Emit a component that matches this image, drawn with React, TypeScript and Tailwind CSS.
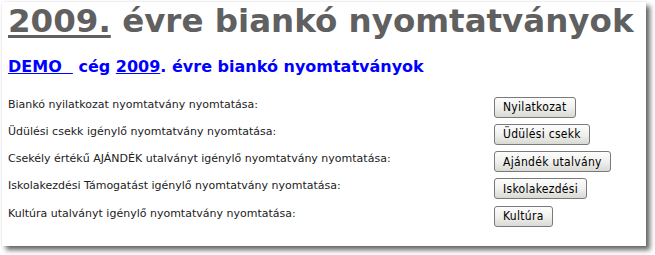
const rows = [
  { label: "Biankó nyilatkozat nyomtatvány nyomtatása:", button: "Nyilatkozat" },
  { label: "Üdülési csekk igénylő nyomtatvány nyomtatása:", button: "Üdülési csekk" },
  { label: "Csekély értékű AJÁNDÉK utalványt igénylő nyomtatvány nyomtatása:", button: "Ajándék utalvány" },
  { label: "Iskolakezdési Támogatást igénylő nyomtatvány nyomtatása:", button: "Iskolakezdési" },
  { label: "Kultúra utalványt igénylő nyomtatvány nyomtatása:", button: "Kultúra" },
];

function PrintButton({ children }: { children: string }) {
  return (
    <button
      type="button"
      className="h-[21px] rounded-[3px] border border-[#7a7a7a] bg-gradient-to-b from-[#fdfdfd] via-[#f0f0ee] to-[#d9d9d4] px-[8px] text-[12px] leading-none tracking-[0.3px] text-black [font-family:'DejaVu_Sans_Condensed','DejaVu_Sans',sans-serif]"
    >
      {children}
    </button>
  );
}

export default function App() {
  return (
    <div className="h-[255px] w-[655px] bg-white pl-[2px] pt-[2px]">
      <div className="h-[244px] w-[644px] bg-white pl-[6px] pt-[1px] shadow-[4px_4px_5px_rgba(0,0,0,0.6),0_0_2px_rgba(0,0,0,0.12)] [font-family:'DejaVu_Sans',Verdana,sans-serif]">
        <h1 className="whitespace-nowrap text-[32.5px] font-bold leading-[36px] text-[#606060]">
          <span className="underline decoration-[3px] underline-offset-[3px]">2009.</span> évre biankó nyomtatványok
        </h1>
        <h2 className="mt-[18px] whitespace-nowrap text-[16px] font-bold leading-[20px] text-[#0000ff]">
          <span className="whitespace-pre underline">DEMO  </span> cég <span className="underline">2009</span>. évre biankó nyomtatványok
        </h2>
        <div className="mt-[19.5px] flex flex-col gap-[6.25px]">
          {rows.map((row) => (
            <div key={row.button} className="flex h-[21px] items-start">
              <span className="w-[486px] pt-[1px] text-[11px] leading-[14px] text-[#222]">{row.label}</span>
              <PrintButton>{row.button}</PrintButton>
            </div>
          ))}
        </div>
      </div>
    </div>
  );
}
